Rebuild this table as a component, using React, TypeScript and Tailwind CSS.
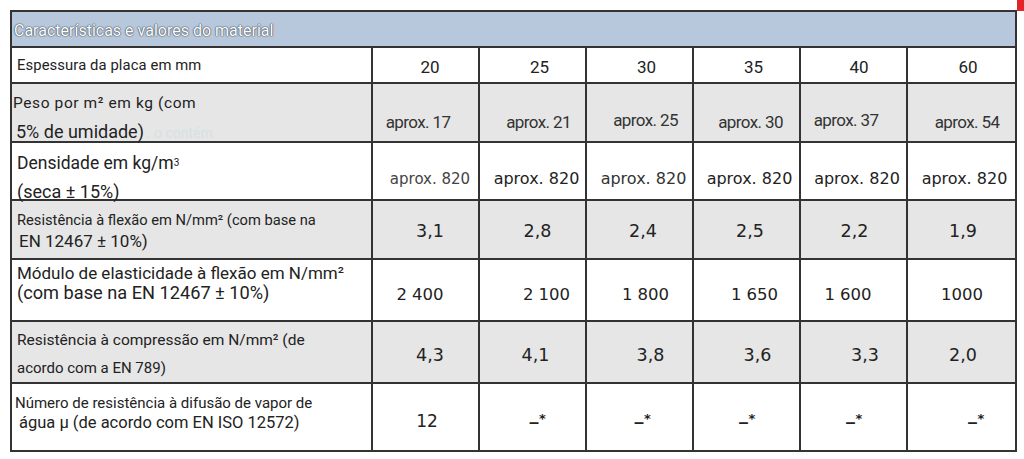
import React from "react";

type V = { t: React.ReactNode; c: string };

const LBL = "font-['Roboto','Liberation_Sans',sans-serif] text-[#222]";
const DJ = "font-['DejaVu_Sans','Verdana',sans-serif]";
const RB = "font-['Roboto','Liberation_Sans',sans-serif]";

function ValueRow({
  vals,
  rowCls,
  label,
}: {
  vals: V[];
  rowCls: string;
  label: React.ReactNode;
}) {
  return (
    <div className={`grid grid-cols-[361px_repeat(6,107px)] ${rowCls}`}>
      <div className="border-r-2 border-[#333]">{label}</div>
      {vals.map((v, i) => (
        <div
          key={i}
          className={`flex items-center justify-center ${i < 5 ? "border-r-2 border-[#333]" : ""} ${v.c}`}
        >
          <span className="whitespace-nowrap">{v.t}</span>
        </div>
      ))}
    </div>
  );
}

const AP = `${RB} text-[17px] text-[#333] tracking-[-0.6px]`;
const A8 = `${DJ} text-[16px] text-[#222]`;
const DS = `${DJ} text-[#222]`;

function Dash() {
  return (
    <span className="inline-flex items-end">
      <span className="font-['Liberation_Sans',sans-serif] text-[18px] font-bold leading-none relative top-[3px]">–</span>
      <span className="text-[13px] font-bold leading-none relative top-[-3px]">*</span>
    </span>
  );
}

export default function App() {
  return (
    <div className="relative w-[1024px] h-[459px] bg-white overflow-hidden">
      <div className="absolute right-0 top-0 w-[7px] h-[11px] bg-[#e3242b]" />
      <div className="ml-[10px] mt-[10px] w-[1007px] border-2 border-[#333] bg-white">
        {/* Title band */}
        <div className="h-[36px] bg-[#b8c8dc] border-b-2 border-[#333] flex items-center pl-[2px] pt-[3px]">
          <span
            className={`${RB} text-[16px] text-white [text-shadow:0_0_1px_#3d4756,0_0_1px_#3d4756,0_0_2px_#6b7686]`}
          >
            Características e valores do material
          </span>
        </div>

        {/* Espessura */}
        <ValueRow
          rowCls="h-[36px] border-b-2 border-[#333] bg-white"
          label={
            <div className={`h-full flex items-center pl-[5px] ${LBL} text-[14.8px] tracking-[0.1px]`}>
              Espessura da placa em mm
            </div>
          }
          vals={[
            { t: "20", c: `${RB} text-[17px] text-[#222] pt-[6px] pl-[9px]` },
            { t: "25", c: `${RB} text-[17px] text-[#222] pt-[6px] pl-[14px]` },
            { t: "30", c: `${RB} text-[17px] text-[#222] pt-[6px] pl-[14px]` },
            { t: "35", c: `${RB} text-[17px] text-[#222] pt-[6px] pl-[14px]` },
            { t: "40", c: `${RB} text-[17px] text-[#222] pt-[6px] pl-[11px]` },
            { t: "60", c: `${RB} text-[17px] text-[#222] pt-[6px] pl-[13px]` },
          ]}
        />

        {/* Peso */}
        <ValueRow
          rowCls="h-[59px] border-b-2 border-[#333] bg-[#e6e6e6]"
          label={
            <div className={`pt-[9px] pl-[1px] ${LBL}`}>
              <div className="leading-[20px] text-[15.5px] tracking-[0.6px]">Peso por m² em kg (com</div>
              <div className="leading-[37px] text-[18px] pl-[3px]">
                5% de umidade)
                <span className="text-[#d6e0e2] text-[14px]">‥ o contém</span>
              </div>
            </div>
          }
          vals={[
            { t: "aprox. 17", c: `${AP} pt-[9px] pr-[15px]` },
            { t: "aprox. 21", c: `${AP} pt-[9px] pl-[12px]` },
            { t: "aprox. 25", c: `${AP} pt-[6px] pl-[12px]` },
            { t: "aprox. 30", c: `${AP} pt-[9px] pl-[8px]` },
            { t: "aprox. 37", c: `${AP} pt-[6px] pr-[15px]` },
            { t: "aprox. 54", c: `${AP} pt-[9px] pl-[11px]` },
          ]}
        />

        {/* Densidade */}
        <ValueRow
          rowCls="h-[58px] border-b-2 border-[#333] bg-white"
          label={
            <div className={`pt-[10px] pl-[5px] ${LBL}`}>
              <div className="leading-[20px] text-[17.5px]">
                Densidade em kg/m<sup className="text-[10px] relative top-[-3px]">3</sup>
              </div>
              <div className="leading-[38px] text-[18px]">(seca ± 15%)</div>
            </div>
          }
          vals={[
            { t: "aprox. 820", c: `${DJ} text-[15px] text-[#444] pt-[4px] pl-[9px]` },
            { t: "aprox. 820", c: `${A8} text-[#111] pt-[4px] pl-[8px]` },
            { t: "aprox. 820", c: `${A8} text-[#333] pt-[4px] pl-[8px]` },
            { t: "aprox. 820", c: `${A8} pt-[4px] pl-[6px]` },
            { t: "aprox. 820", c: `${A8} pt-[4px] pl-[7px]` },
            { t: "aprox. 820", c: `${A8} pt-[4px] pl-[6px]` },
          ]}
        />

        {/* Resistência à flexão */}
        <ValueRow
          rowCls="h-[59px] border-b-2 border-[#333] bg-[#e6e6e6]"
          label={
            <div className={`pt-[9px] pl-[5px] ${LBL}`}>
              <div className="leading-[20px] text-[14.7px]">
                Resistência à flexão em N/mm² (com base na
              </div>
              <div className="leading-[23px] text-[17px] pl-[2px]">EN 12467 ± 10%)</div>
            </div>
          }
          vals={[
            { t: "3,1", c: `${DJ} text-[17.5px] text-[#222] pt-[4px] pl-[9px]` },
            { t: "2,8", c: `${DJ} text-[17.5px] text-[#222] pt-[4px] pl-[10px]` },
            { t: "2,4", c: `${DJ} text-[17.5px] text-[#222] pt-[4px] pl-[7px]` },
            { t: "2,5", c: `${DJ} text-[17.5px] text-[#222] pt-[4px] pl-[7px]` },
            { t: "2,2", c: `${DJ} text-[17.5px] text-[#222] pt-[4px] pl-[2px]` },
            { t: "1,9", c: `${DJ} text-[17.5px] text-[#222] pt-[4px] pl-[3px]` },
          ]}
        />

        {/* Módulo */}
        <ValueRow
          rowCls="h-[62px] border-b-2 border-[#333] bg-white"
          label={
            <div className={`pt-[3px] pl-[5px] ${LBL}`}>
              <div className="leading-[20px] text-[17px]">
                Módulo de elasticidade à flexão em N/mm²
              </div>
              <div className="leading-[18px] text-[18.2px] mt-[1px]">
                (com base na EN 12467 ± 10%)
              </div>
            </div>
          }
          vals={[
            { t: "2 400", c: `${DJ} text-[16.5px] text-[#222] pt-[10px] pr-[11px]` },
            { t: "2 100", c: `${DJ} text-[16.5px] text-[#222] pt-[10px] pl-[28px]` },
            { t: "1 800", c: `${DJ} text-[16.5px] text-[#222] pt-[10px] pl-[12px]` },
            { t: "1 650", c: `${DJ} text-[16.5px] text-[#222] pt-[10px] pl-[16px]` },
            { t: "1 600", c: `${DJ} text-[16.5px] text-[#222] pt-[10px] pr-[11px]` },
            { t: "1000", c: `${DJ} text-[16.5px] text-[#222] pt-[10px] pl-[1px]` },
          ]}
        />

        {/* Compressão */}
        <ValueRow
          rowCls="h-[62px] border-b-2 border-[#333] bg-[#e6e6e6]"
          label={
            <div className={`pt-[8px] pl-[5px] ${LBL}`}>
              <div className="leading-[20px] text-[15.5px]">
                Resistência à compressão em N/mm² (de
              </div>
              <div className="leading-[36px] text-[15px]">acordo com a EN 789)</div>
            </div>
          }
          vals={[
            { t: "4,3", c: `${DJ} text-[17.5px] text-[#222] pt-[2px] pl-[9px]` },
            { t: "4,1", c: `${DJ} text-[17.5px] text-[#222] pt-[2px] pl-[6px]` },
            { t: "3,8", c: `${DJ} text-[17.5px] text-[#222] pt-[2px] pl-[22px]` },
            { t: "3,6", c: `${DJ} text-[17.5px] text-[#222] pt-[2px] pl-[22px]` },
            { t: "3,3", c: `${DJ} text-[17.5px] text-[#222] pt-[2px] pl-[23px]` },
            { t: "2,0", c: `${DJ} text-[17.5px] text-[#222] pt-[2px] pl-[3px]` },
          ]}
        />

        {/* Número */}
        <ValueRow
          rowCls="h-[66px] bg-white"
          label={
            <div className={`pt-[9px] pl-[3px] ${LBL}`}>
              <div className="leading-[20px] text-[15px]">
                Número de resistência à difusão de vapor de
              </div>
              <div className="leading-[20px] text-[16.5px] pl-[4px]">
                água µ (de acordo com EN ISO 12572)
              </div>
            </div>
          }
          vals={[
            { t: "12", c: `${DJ} text-[17px] text-[#222] pt-[10px] pl-[3px]` },
            { t: <Dash />, c: `${DS} pt-[6px] pl-[10px]` },
            { t: <Dash />, c: `${DS} pt-[6px] pl-[6px]` },
            { t: <Dash />, c: `${DS} pt-[6px] pl-[1px]` },
            { t: <Dash />, c: `${DS} pt-[6px] pl-[1px]` },
            { t: <Dash />, c: `${DS} pt-[6px] pl-[29px]` },
          ]}
        />
      </div>
    </div>
  );
}
